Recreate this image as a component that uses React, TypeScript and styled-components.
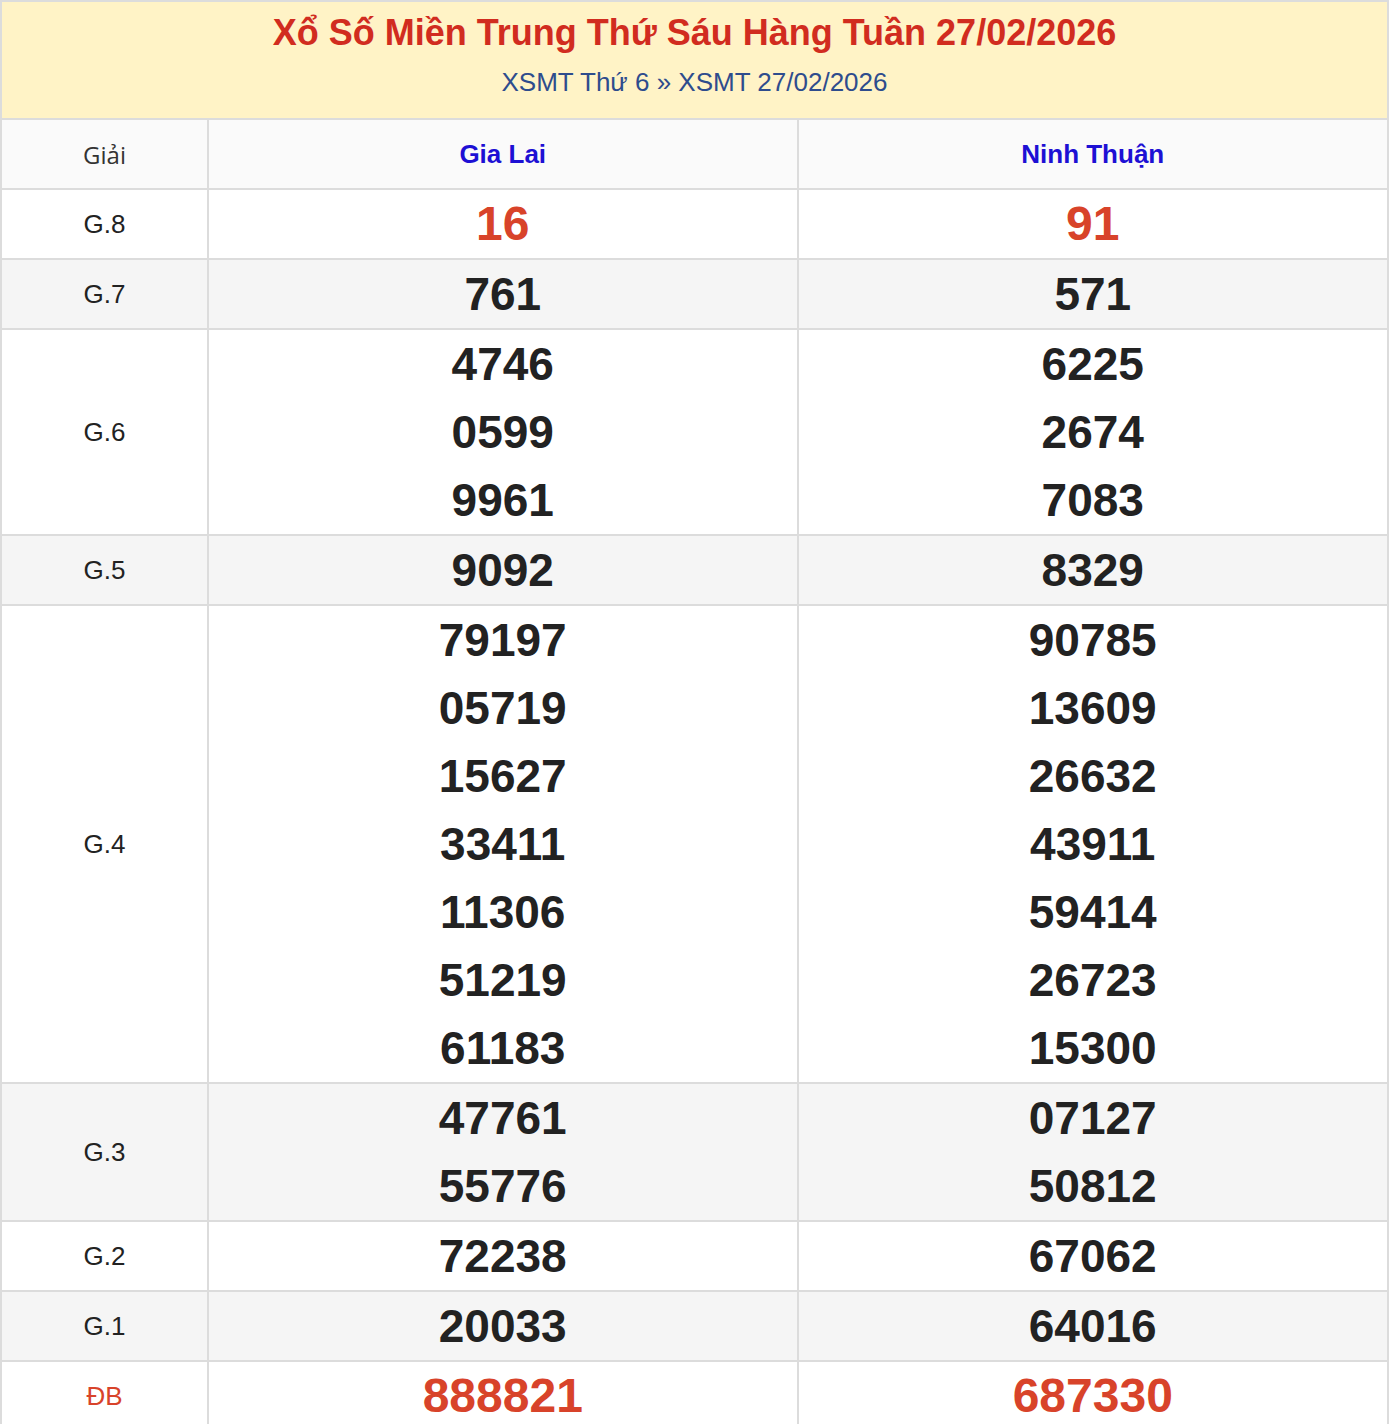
import React from 'react';
import styled, { createGlobalStyle } from 'styled-components';

const GlobalStyle = createGlobalStyle`
  html, body {
    margin: 0;
    padding: 0;
    background: #fff;
  }
  body {
    font-family: "Liberation Sans", Arial, sans-serif;
  }
`;

// Data
const provinces = ['Gia Lai', 'Ninh Thuận'];

type Prize = {
  name: string;
  special?: boolean;
  results: string[][];
};

const prizes: Prize[] = [
  { name: 'G.8', special: true, results: [['16'], ['91']] },
  { name: 'G.7', results: [['761'], ['571']] },
  { name: 'G.6', results: [['4746', '0599', '9961'], ['6225', '2674', '7083']] },
  { name: 'G.5', results: [['9092'], ['8329']] },
  {
    name: 'G.4',
    results: [
      ['79197', '05719', '15627', '33411', '11306', '51219', '61183'],
      ['90785', '13609', '26632', '43911', '59414', '26723', '15300'],
    ],
  },
  { name: 'G.3', results: [['47761', '55776'], ['07127', '50812']] },
  { name: 'G.2', results: [['72238'], ['67062']] },
  { name: 'G.1', results: [['20033'], ['64016']] },
  { name: 'ĐB', special: true, results: [['888821'], ['687330']] },
];

// Style
const Box = styled.div`
  border: 2px solid #dcdcdc;
  border-bottom: none;
  width: 1389px;
  box-sizing: border-box;
`;

const Header = styled.div`
  background: #fff3c6;
  text-align: center;
  height: 118px;
  box-sizing: border-box;
  padding-top: 10px;
  border-bottom: 2px solid #dcdcdc;
`;

const Title = styled.h1`
  margin: 0;
  color: #d12c1f;
  font-size: 36px;
  line-height: 42px;
  font-weight: bold;
`;

const Crumbs = styled.div`
  margin-top: 13px;
  color: #2e4c8d;
  font-size: 26px;
  line-height: 30px;
`;

const Table = styled.table`
  width: 100%;
  border-collapse: collapse;
  table-layout: fixed;
`;

const HeadCell = styled.th<{ $first?: boolean }>`
  background: #fafafa;
  height: 68px;
  padding: 0;
  font-size: ${(p) => (p.$first ? '24px' : '26px')};
  font-family: ${(p) => (p.$first ? '"Open Sans", "Noto Sans", sans-serif' : '"Liberation Sans", Arial, sans-serif')};
  font-weight: ${(p) => (p.$first ? 'normal' : 'bold')};
  color: ${(p) => (p.$first ? '#333' : '#1d10d4')};
  border-left: ${(p) => (p.$first ? 'none' : '2px solid #dcdcdc')};
  border-bottom: 2px solid #dcdcdc;
`;

const Row = styled.tr<{ $alt: boolean }>`
  background: ${(p) => (p.$alt ? '#f5f5f5' : '#fff')};
`;

const NameCell = styled.td<{ $special?: boolean }>`
  padding: 0;
  text-align: center;
  font-size: 26px;
  color: ${(p) => (p.$special ? '#d8432a' : '#222')};
  border-bottom: 2px solid #dcdcdc;
`;

const NumCell = styled.td`
  padding: 0;
  text-align: center;
  border-left: 2px solid #dcdcdc;
  border-bottom: 2px solid #dcdcdc;
`;

const Num = styled.div<{ $special?: boolean }>`
  height: 68px;
  line-height: 68px;
  font-weight: bold;
  font-size: ${(p) => (p.$special ? '48px' : '46px')};
  color: ${(p) => (p.$special ? '#d8432a' : '#222')};
`;

// Component
function App() {
  return (
    <>
      <GlobalStyle />
      <Box>
        <Header>
          <Title>Xổ Số Miền Trung Thứ Sáu Hàng Tuần 27/02/2026</Title>
          <Crumbs>XSMT Thứ 6 » XSMT 27/02/2026</Crumbs>
        </Header>
        <Table>
          <colgroup>
            <col style={{ width: '206px' }} />
            <col />
            <col />
          </colgroup>
          <thead>
            <tr>
              <HeadCell $first>Giải</HeadCell>
              {provinces.map((p) => (
                <HeadCell key={p}>{p}</HeadCell>
              ))}
            </tr>
          </thead>
          <tbody>
            {prizes.map((prize, i) => (
              <Row key={prize.name} $alt={i % 2 === 1}>
                <NameCell $special={prize.name === 'ĐB'}>{prize.name}</NameCell>
                {prize.results.map((list, j) => (
                  <NumCell key={j}>
                    {list.map((n, k) => (
                      <Num key={k} $special={prize.special}>{n}</Num>
                    ))}
                  </NumCell>
                ))}
              </Row>
            ))}
          </tbody>
        </Table>
      </Box>
    </>
  );
}

export default App;
